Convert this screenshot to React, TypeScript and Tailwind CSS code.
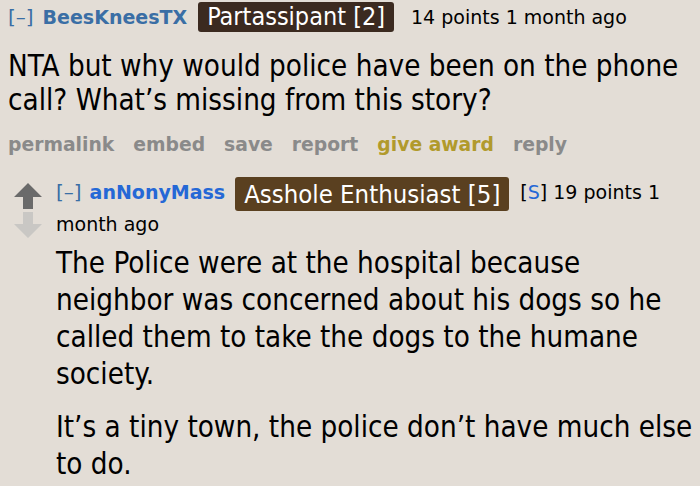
const verdana = { fontFamily: '"DejaVu Sans", Verdana, sans-serif' };
const tahoma = { fontFamily: '"DejaVu Sans Condensed", Tahoma, sans-serif' };

function Arrow({ up, color }: { up: boolean; color: string }) {
  return (
    <svg width="28" height="26" viewBox="0 0 28 26" className={up ? '' : 'rotate-180'}>
      <path d="M14 0 L28 14 L19 14 L19 26 L9 26 L9 14 L0 14 Z" fill={color} />
    </svg>
  );
}

export default function App() {
  return (
    <div className="w-[700px] h-[486px] overflow-hidden bg-[#e3ddd6] text-black" style={verdana}>
      <div className="pl-2">
        <div className="flex items-center h-[34px]">
          <span className="text-[#3a6ea5] text-[20px]">[–]</span>
          <span className="ml-[9px] text-[#3a6ea5] text-[19px] font-bold">BeesKneesTX</span>
          <span
            className="ml-[11px] bg-[#3b2a20] text-white text-[25px] px-[9px] h-[30px] flex items-center rounded-[3px]"
            style={tahoma}
          >
            Partassipant [2]
          </span>
          <span className="ml-[17px] text-[19px]">14 points 1 month ago</span>
        </div>
        <p className="mt-[15px] text-[29.3px] leading-[34px]" style={tahoma}>
          NTA but why would police have been on the phone call? What’s missing from this story?
        </p>
        <div className="flex gap-[19px] mt-[16px] text-[18.75px] leading-[24px] font-bold text-[#8a8a8a]">
          <span>permalink</span>
          <span>embed</span>
          <span>save</span>
          <span>report</span>
          <span className="text-[#b19a2c]">give award</span>
          <span>reply</span>
        </div>
      </div>

      <div className="flex mt-[20px] pl-[14px]">
        <div className="flex flex-col gap-[3px] pt-[6px] w-[42px] shrink-0">
          <Arrow up color="#6a6a6a" />
          <Arrow up={false} color="#c9c7c4" />
        </div>
        <div className="flex-1">
          <div className="text-[19px] leading-[31px]">
            <span className="text-[#3a6ea5] text-[20px] mr-[8px]">[–]</span>
            <span className="text-[#2568d6] text-[19px] font-bold mr-[10px]">anNonyMass</span>
            <span
              className="inline-block align-middle -my-[2px] h-[34px] leading-[34px] bg-[#5a4020] text-white text-[25.5px] px-[9px] rounded-[3px] mr-[11px]"
              style={tahoma}
            >
              Asshole Enthusiast [5]
            </span>
            <span>
              [<span className="text-[#2568d6]">S</span>] 19 points 1 month ago
            </span>
          </div>
          <div className="mt-[5px] w-[638px] text-[29.3px] leading-[37px]" style={tahoma}>
            <p>
              The Police were at the hospital because neighbor was concerned about his dogs so he called them to take the dogs to the humane society.
            </p>
            <p className="mt-[16px]">
              It’s a tiny town, the police don’t have much else to do.
            </p>
          </div>
        </div>
      </div>
    </div>
  );
}
